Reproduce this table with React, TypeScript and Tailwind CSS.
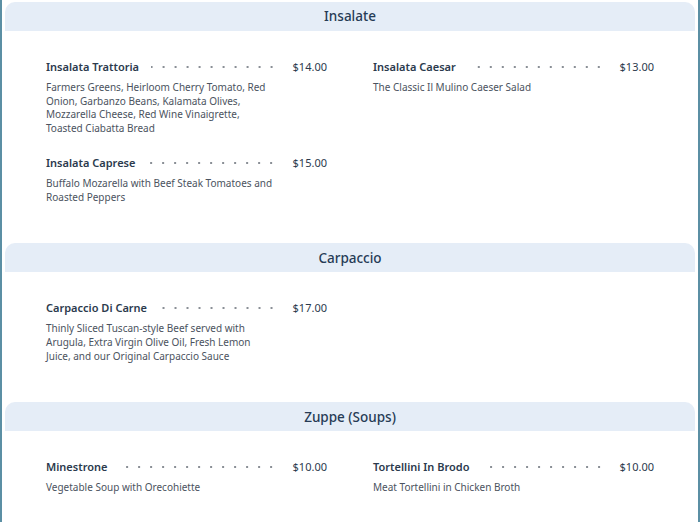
import React from "react";

type Item = { name: string; price: string; desc: string };
type Section = { title: string; rows: Item[][] };

const sections: Section[] = [
  {
    title: "Insalate",
    rows: [
      [
        {
          name: "Insalata Trattoria",
          price: "$14.00",
          desc: "Farmers Greens, Heirloom Cherry Tomato, Red Onion, Garbanzo Beans, Kalamata Olives, Mozzarella Cheese, Red Wine Vinaigrette, Toasted Ciabatta Bread",
        },
        {
          name: "Insalata Caesar",
          price: "$13.00",
          desc: "The Classic Il Mulino Caeser Salad",
        },
      ],
      [
        {
          name: "Insalata Caprese",
          price: "$15.00",
          desc: "Buffalo Mozarella with Beef Steak Tomatoes and Roasted Peppers",
        },
      ],
    ],
  },
  {
    title: "Carpaccio",
    rows: [
      [
        {
          name: "Carpaccio Di Carne",
          price: "$17.00",
          desc: "Thinly Sliced Tuscan-style Beef served with Arugula, Extra Virgin Olive Oil, Fresh Lemon Juice, and our Original Carpaccio Sauce",
        },
      ],
    ],
  },
  {
    title: "Zuppe (Soups)",
    rows: [
      [
        {
          name: "Minestrone",
          price: "$10.00",
          desc: "Vegetable Soup with Orecohiette",
        },
        {
          name: "Tortellini In Brodo",
          price: "$10.00",
          desc: "Meat Tortellini in Chicken Broth",
        },
      ],
    ],
  },
];

function MenuItem({ item }: { item: Item }) {
  return (
    <div>
      <div className="flex items-center h-[16px] leading-[16px]">
        <span className="text-[11px] font-semibold text-[#2b3a4d] whitespace-nowrap">{item.name}</span>
        <span className="flex-1 ml-[12px] mr-[15px] h-[4px] bg-[radial-gradient(circle,#8a8f96_0.9px,transparent_1.3px)] bg-[length:12px_4px] bg-repeat-x bg-[position:right_center]" />
        <span className="text-[11px] text-[#2b3a4d] whitespace-nowrap">{item.price}</span>
      </div>
      <p className="mt-[6px] max-w-[228px] text-[10px] leading-[13.7px] text-[#4b5360]">{item.desc}</p>
    </div>
  );
}

export default function App() {
  return (
    <div
      className="w-[700px] h-[522px] overflow-hidden bg-white border-l-2 border-r-2 border-[#5b8fa4] px-[3px] pt-[2px]"
      style={{ fontFamily: "'Noto Sans', sans-serif" }}
    >
      {sections.map((s) => (
        <section key={s.title} className="pb-[39px]">
          <div className="h-[29px] rounded-t-[10px] bg-[#e5edf7] flex items-center justify-center text-[13.5px] font-medium text-[#263b55]">
            {s.title}
          </div>
          <div className="px-[41px] pt-[28px] flex flex-col gap-[19px]">
            {s.rows.map((row, i) => (
              <div key={i} className="grid grid-cols-2 gap-x-[46px]">
                {row.map((it) => (
                  <MenuItem key={it.name} item={it} />
                ))}
              </div>
            ))}
          </div>
        </section>
      ))}
    </div>
  );
}
